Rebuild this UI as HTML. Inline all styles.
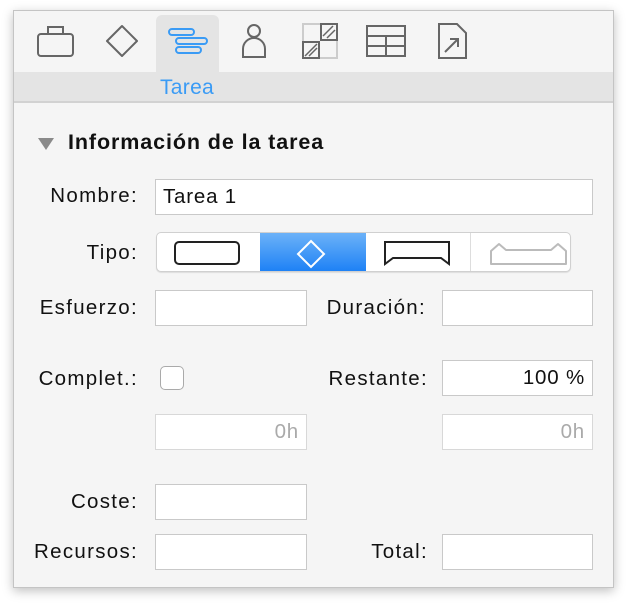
<!DOCTYPE html>
<html><head><meta charset="utf-8"><style>
*{margin:0;padding:0;box-sizing:border-box}
body{width:626px;height:604px;background:#fff;position:relative;overflow:hidden;font-family:"Liberation Sans",sans-serif}
.win{position:absolute;left:13px;top:10px;width:601px;height:578px;background:#f5f5f5;border:1px solid #c4c4c4;box-shadow:0 3px 10px rgba(0,0,0,.25)}
.tabsel{position:absolute;left:156px;top:15px;width:63px;height:58px;background:#e4e4e4;border-radius:6px 6px 0 0}
.bar{position:absolute;left:14px;top:72px;width:599px;height:31px;background:#e4e4e4;border-bottom:2px solid #d2d2d2}
.lbl{position:absolute;font-size:20.5px;letter-spacing:1.3px;color:#111;text-align:right;width:201px}
.in{position:absolute;background:#fff;border:1px solid #c9c9c9;font-size:20.5px;letter-spacing:.8px;color:#111;padding:4px 7px;line-height:25px}
svg{position:absolute}
</style></head><body>
<div class="win"></div>
<div class="tabsel"></div>
<div class="bar"></div>
<div style="position:absolute;left:160px;top:76px;font-size:21px;letter-spacing:.3px;color:#3a9bf5">Tarea</div>
<svg width="626" height="80" style="left:0;top:0" fill="none" stroke="#666" stroke-width="2">
<rect x="38" y="34" width="35" height="22" rx="3"/><path d="M48 34v-7h15v7"/>
<path d="M122 26l15 15-15 15-15-15z" stroke-linejoin="round"/>
<g stroke="#3a9bf5"><rect x="169" y="29" width="25" height="6" rx="3"/><rect x="176" y="38" width="31" height="6" rx="3"/><rect x="176" y="47" width="25" height="6" rx="3"/></g>
<circle cx="254" cy="31" r="6"/><path d="M243 57v-8a11 11 0 0 1 22 0v8z"/>
<rect x="303" y="24" width="34" height="34" stroke="#ccc"/><rect x="321" y="24" width="16" height="16"/><rect x="303" y="42" width="16" height="16"/>
<path d="M323 36l10-10M327 38l8-8M305 56l12-12M309 56l8-8" stroke-width="1.5"/>
<rect x="367" y="26" width="38" height="30"/><path d="M367 36h38M367 46h38M386 36v20"/>
<path d="M439 24h18l9 9v25h-27z"/><path d="M445 52l13-13M450 39h8v8"/>
</svg>
<svg width="20" height="16" style="left:37px;top:136px"><path d="M1 2h16l-8 12z" fill="#8a8a8a"/></svg>
<div style="position:absolute;left:68px;top:130px;font-size:21.5px;letter-spacing:.9px;font-weight:bold;color:#111">Información de la tarea</div>
<div class="lbl" style="left:-63px;top:184px">Nombre:</div>
<div class="in" style="left:155px;top:179px;width:438px;height:36px">Tarea 1</div>
<div class="lbl" style="left:-63px;top:241px">Tipo:</div>
<div style="position:absolute;left:156px;top:232px;width:415px;height:40px;background:#fff;border:1px solid #d0d0d0;border-radius:5px;box-shadow:0 1px 1px rgba(0,0,0,.1);overflow:hidden">
<div style="position:absolute;left:103px;top:0;width:106px;height:40px;background:linear-gradient(#6cb2f8,#1a7ff5)"></div>
<div style="position:absolute;left:313px;top:0;width:1px;height:40px;background:#ddd"></div>
</div>
<svg width="430" height="45" style="left:150px;top:228px" fill="none">
<rect x="25" y="14" width="64" height="22" rx="4" stroke="#222" stroke-width="2"/>
<path d="M161 13l13 13-13 13-13-13z" stroke="#fff" stroke-width="2"/>
<path d="M235 14h64v22l-8-6h-48l-8 6z" stroke="#222" stroke-width="2"/>
<path d="M341 23l8-7 7 6h45l7-6 8 7v13h-75z" stroke="#bbb" stroke-width="2" stroke-linejoin="round"/>
</svg>
<div class="lbl" style="left:-63px;top:296px">Esfuerzo:</div>
<div class="in" style="left:155px;top:290px;width:152px;height:36px"></div>
<div class="lbl" style="left:225px;top:296px">Duración:</div>
<div class="in" style="left:442px;top:290px;width:151px;height:36px"></div>
<div class="lbl" style="left:-63px;top:367px">Complet.:</div>
<div style="position:absolute;left:160px;top:366px;width:24px;height:24px;background:#fff;border:1px solid #aaa;border-radius:5px"></div>
<div class="lbl" style="left:227px;top:367px">Restante:</div>
<div class="in" style="left:442px;top:360px;width:151px;height:36px;text-align:right">100 %</div>
<div class="in" style="left:155px;top:414px;width:152px;height:36px;text-align:right;color:#aaa;border-color:#d8d8d8">0h</div>
<div class="in" style="left:442px;top:414px;width:151px;height:36px;text-align:right;color:#aaa;border-color:#d8d8d8">0h</div>
<div class="lbl" style="left:-63px;top:490px">Coste:</div>
<div class="in" style="left:155px;top:484px;width:152px;height:36px"></div>
<div class="lbl" style="left:-63px;top:540px">Recursos:</div>
<div class="in" style="left:155px;top:534px;width:152px;height:36px"></div>
<div class="lbl" style="left:227px;top:540px">Total:</div>
<div class="in" style="left:442px;top:534px;width:151px;height:36px"></div>
</body></html>
